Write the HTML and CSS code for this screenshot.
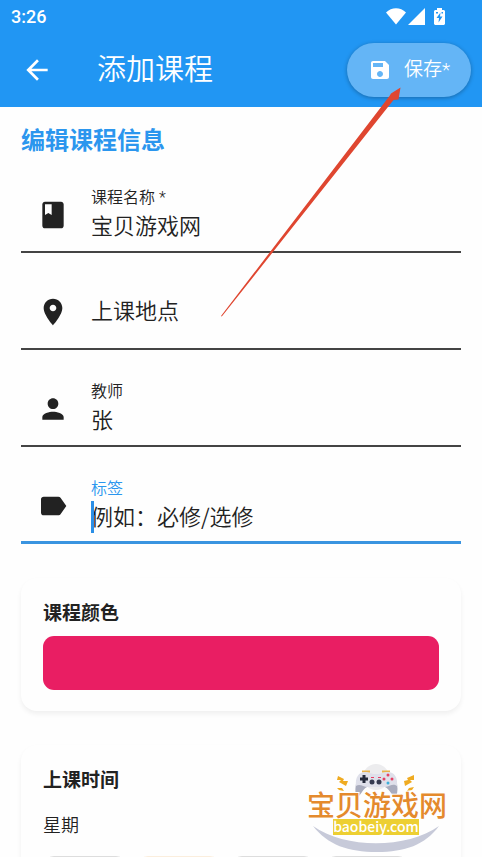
FILE: index.html
```
<!DOCTYPE html>
<html lang="zh-CN">
<head>
  <meta charset="UTF-8">
  <meta name="viewport" content="width=device-width, initial-scale=1.0">
  <title>添加课程</title>
  <link rel="stylesheet" href="styles.css">
</head>
<body>
  <header>
    <div class="status">
      <span class="hora">3:26</span>
      <div class="status-icons">
        <svg width="20" height="17" viewBox="0 0 20 17"><path d="M0 4.500C5.500-1.200 14.500-1.200 20 4.500L10 16.500Z" fill="white"/></svg>
        <svg width="17" height="17" viewBox="0 0 17 17"><path d="M17 0V17H0Z" fill="white"/></svg>
        <svg class="battery" width="11" height="17" viewBox="0 0 11 17"><path d="M3 0H8V2H10L11 3V16L10 17H1L0 16V3L1 2H3Z" fill="white"/><path d="M6.500 4.500L2.500 10H5L4.500 14.500L8.500 8.500H6Z" fill="#2196f3"/><path d="M2 4H4V5.500H2ZM7.500 4H9V5.500H7.500Z" fill="#2196f3"/></svg>
      </div>
    </div>
    <div class="toolbar">
      <button class="back" aria-label="返回">
        <svg width="32" height="32" viewBox="0 0 24 24"><path d="M20 11H7.830l5.590-5.590L12 4l-8 8 8 8 1.410-1.410L7.830 13H20v-2z" fill="white"/></svg>
      </button>
      <h1>添加课程</h1>
      <button class="save">
        <svg width="24" height="24" viewBox="0 0 24 24"><path d="M17 3H5c-1.110 0-2 .9-2 2v14c0 1.100.89 2 2 2h14c1.100 0 2-.9 2-2V7l-4-4zm-5 16c-1.660 0-3-1.340-3-3s1.340-3 3-3 3 1.340 3 3-1.340 3-3 3zm3-10H5V5h10v4z" fill="white"/></svg>
        保存*
      </button>
    </div>
  </header>

  <main>
    <h2>编辑课程信息</h2>

    <div class="field">
      <svg class="icon" viewBox="0 0 24 24"><path d="M18 2H6c-1.100 0-2 .9-2 2v16c0 1.100.9 2 2 2h12c1.100 0 2-.9 2-2V4c0-1.100-.9-2-2-2zM6 4h5v8l-2.500-1.500L6 12V4z"/></svg>
      <div class="field-text">
        <label for="name">课程名称 *</label>
        <input id="name" type="text" value="宝贝游戏网">
      </div>
    </div>

    <div class="field empty">
      <svg class="icon" viewBox="0 0 24 24"><path d="M12 2C8.130 2 5 5.130 5 9c0 5.250 7 13 7 13s7-7.750 7-13c0-3.870-3.130-7-7-7zm0 9.500c-1.380 0-2.500-1.120-2.500-2.500s1.120-2.500 2.500-2.500 2.500 1.120 2.500 2.500-1.120 2.500-2.500 2.500z"/></svg>
      <div class="field-text">
        <label for="place">上课地点</label>
        <input id="place" type="text">
      </div>
    </div>

    <div class="field">
      <svg class="icon" viewBox="0 0 24 24"><path d="M12 12c2.210 0 4-1.790 4-4s-1.790-4-4-4-4 1.790-4 4 1.790 4 4 4zm0 2c-2.670 0-8 1.340-8 4v2h16v-2c0-2.660-5.330-4-8-4z"/></svg>
      <div class="field-text">
        <label for="teacher">教师</label>
        <input id="teacher" type="text" value="张">
      </div>
    </div>

    <div class="field active">
      <svg class="icon" viewBox="0 0 24 24"><path d="M17.630 5.840C17.270 5.330 16.670 5 16 5L5 5.010C3.900 5.010 3 5.900 3 7v10c0 1.100.9 1.990 2 1.990L16 19c.67 0 1.270-.33 1.630-.84L22 12l-4.370-6.160z"/></svg>
      <div class="field-text">
        <label for="tag">标签</label>
        <input id="tag" type="text" placeholder="例如：必修/选修">
        <span class="caret"></span>
      </div>
    </div>

    <section class="card">
      <h3>课程颜色</h3>
      <button class="color" aria-label="课程颜色"></button>
    </section>

    <section class="card">
      <h3>上课时间</h3>
      <p>星期</p>
      <div class="days">
        <button aria-label="周一"></button>
        <button class="today" aria-label="周二"></button>
        <button aria-label="周三"></button>
        <button aria-label="周四"></button>
      </div>
    </section>
  </main>

  <svg class="arrow" width="180" height="230" viewBox="0 0 180 230"><path d="M0 229L168.500 9L170 6.500L179.500 0.500L177.500 12.500L172.500 13L0.800 229.500Z" fill="#df4630"/></svg>

  <svg class="watermark" width="150" height="98" viewBox="0 0 150 98">
    <circle cx="75" cy="21" r="13" fill="#ececee"/>
    <path d="M61 15.500H69M81 15.500H89" stroke="#e8b34b" stroke-width="2"/>
    <path d="M56 24C54 30 54 36 55 41C60 41 61 33 66 31H84C89 33 91 41 95 41C97 36 97 30 95 24Z" fill="#a9acbd"/>
    <path d="M55 30C54 21 58 16 64 16C68 16 69 18 75 18C81 18 82 16 87 16C93 16 97 21 96 30C92 27 89 30 84 31H67C62 31 59 27 55 30Z" fill="#dfe0ea"/>
    <path d="M59 23H67M63 19V27" stroke="#252a3b" stroke-width="3"/>
    <circle cx="83" cy="23" r="1.500" fill="#e64065"/><circle cx="91" cy="23" r="1.500" fill="#e64065"/>
    <circle cx="87" cy="19" r="1.500" fill="#e64065"/><circle cx="87" cy="27" r="1.500" fill="#3fafdb"/>
    <circle cx="71" cy="26" r="2.500" fill="#353a50"/><circle cx="78" cy="26" r="2.500" fill="#353a50"/>
    <path d="M70 21.500H73M77 21.500H80" stroke="#e64065"/>
    <path d="M37 20L43 23L42 25L47 25L45 30L38 26L40 24L36 24ZM36 32L41 32L43 35L38 34Z" fill="#efab21"/>
    <path d="M113 19L106 22L107 24L103 25L104 30L111 26L109 24L113 24ZM113 31L108 32L106 35L111 34Z" fill="#efab21"/>
    <path d="M12 70C44 93 106 93 138 70C124 89 104 96 76 96C47 96 27 89 12 70Z" fill="#c7cad9"/>
    <text class="mark-name" x="76" y="60" text-anchor="middle">宝贝游戏网</text>
    <rect x="32" y="63" width="86" height="16" fill="#edcf32"/>
    <text class="mark-url" x="75" y="76" text-anchor="middle">baobeiy.com</text>
  </svg>
</body>
</html>
```
FILE: styles.css
```
* {
  box-sizing: border-box;
  margin: 0;
}

body {
  position: relative;
  height: 100vh;
  overflow: hidden;
  background-color: #fefefe;
  color: #222;
  font-family: Roboto, "Noto Sans CJK SC", sans-serif;
  font-size: 18px;
}

button, input {
  font-family: inherit;
  color: inherit;
  border: none;
  outline: none;
  padding: 0;
  background: none;
}

button {
  cursor: pointer;
}

svg {
  display: block;
  flex-shrink: 0;
}

header {
  background-color: #2196f3;
  color: white;
}

.status {
  display: flex;
  justify-content: space-between;
  align-items: center;
  height: 32px;
  padding: 0 37px 0 11px;
}

.hora {
  font-size: 18px;
  font-weight: 500;
}

.status-icons {
  display: flex;
  align-items: center;
  gap: 2px;
}

.battery {
  margin-left: 7px;
}

.toolbar {
  display: flex;
  align-items: center;
  height: 75px;
  padding: 0 11px 0 21px;
}

h1 {
  flex-grow: 1;
  margin-left: 44px;
  font-size: 29px;
  line-height: 42px;
  font-weight: 350;
}

.save {
  display: flex;
  align-items: center;
  gap: 12px;
  height: 54px;
  padding: 0 21px;
  border-radius: 27px;
  background-color: #64b5f6;
  box-shadow: 0 1px 4px rgba(0, 0, 0, 0.3);
  font-size: 19px;
  line-height: 24px;
  font-weight: 350;
}

main {
  padding: 16px 21px 0;
}

h2 {
  margin-bottom: 14px;
  color: #2b96ee;
  font-size: 24px;
  line-height: 36px;
  font-weight: bold;
}

.field {
  display: flex;
  align-items: center;
  height: 80px;
  margin-bottom: 17px;
  padding: 6px 0 0 16px;
  border-bottom: 2px solid #444;
}

.icon {
  width: 32px;
  height: 32px;
  fill: #222;
}

.field-text {
  position: relative;
  display: grid;
  flex-grow: 1;
  margin-left: 22px;
}

.field label {
  font-size: 16px;
  line-height: 24px;
  font-weight: 350;
}

.field input {
  width: 100%;
  height: 34px;
  padding-bottom: 6px;
  font-family: "Noto Sans CJK SC", sans-serif;
  font-size: 22px;
  line-height: 28px;
  font-weight: 350;
}

.field input::placeholder {
  color: #222;
}

.empty label, .empty input {
  grid-area: 1 / 1;
}

.field.empty label {
  font-size: 22px;
  line-height: 36px;
}

.active {
  border-bottom: 3px solid #3a94e0;
}

.active label {
  color: #2b96ee;
}

.caret {
  position: absolute;
  left: 0;
  bottom: 2px;
  width: 3px;
  height: 32px;
  background-color: #2b8fe6;
}

.card {
  margin-top: 34px;
  padding: 22px 22px 21px;
  border-radius: 16px;
  background-color: #fefefe;
  box-shadow: 0 3px 5px rgba(0, 0, 0, 0.06);
}

h3 {
  font-size: 19px;
  line-height: 28px;
  font-weight: bold;
}

.color {
  display: block;
  width: 100%;
  height: 54px;
  margin-top: 8px;
  border-radius: 11px;
  background-color: #e91e63;
}

.card p {
  margin: 17px 0 16px;
  line-height: 28px;
  font-weight: 350;
}

.days {
  display: flex;
  gap: 10px;
}

.days button {
  width: 84px;
  height: 42px;
  border: 1px solid #ddd;
  border-radius: 11px;
}

.days .today {
  border-color: #fbeedd;
}

.arrow {
  position: absolute;
  top: 87px;
  left: 221px;
}

.watermark {
  position: absolute;
  right: 31px;
  bottom: 3px;
}

.mark-name {
  fill: #e48a2d;
  stroke: white;
  stroke-width: 2px;
  paint-order: stroke;
  font-family: "Noto Sans CJK SC", sans-serif;
  font-size: 28px;
  font-weight: 500;
}

.mark-url {
  fill: white;
  font-family: "Noto Sans CJK SC", sans-serif;
  font-size: 14px;
  font-weight: 500;
}
```
